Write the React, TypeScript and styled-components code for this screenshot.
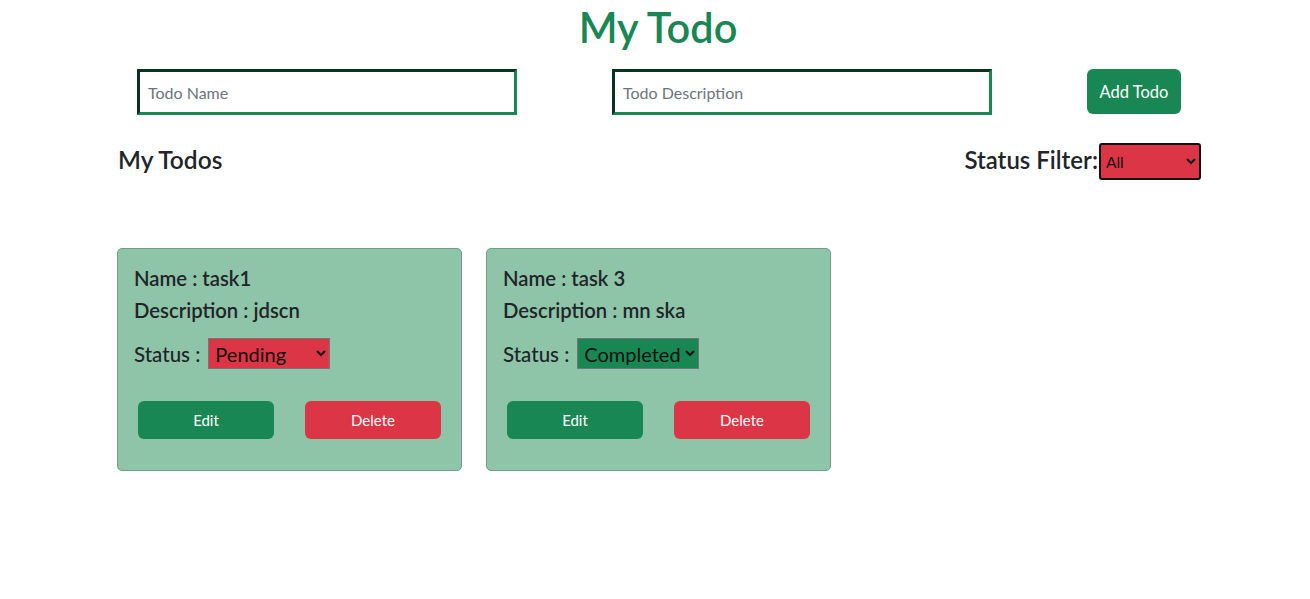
import React from "react";
import styled, { createGlobalStyle } from "styled-components";

const FONT = `"Segoe UI", Lato, "Liberation Sans", sans-serif`;

const Global = createGlobalStyle`
  html, body { margin: 0; padding: 0; background: #fff; }
  body { font-family: ${FONT}; color: #212529; font-size: 16px; }
  * { box-sizing: border-box; }
`;

const Page = styled.div`
  width: 1084px;
  margin-left: 117px;
  display: flex;
  flex-direction: column;
`;

const Title = styled.h1`
  margin: 0;
  margin-left: -117px;
  width: 1310px;
  padding-top: 3px;
  padding-left: 6px;
  text-align: center;
  font-size: 41.5px;
  font-weight: 600;
  line-height: 48px;
  color: #198754;
`;

const InputRow = styled.div`
  display: flex;
  gap: 95px;
  margin-top: 18px;
  margin-left: 20px;
  align-items: flex-start;
`;

const TextInput = styled.input`
  width: 380px;
  height: 46px;
  border: 3px inset #198754;
  padding: 0 8px;
  font-family: ${FONT};
  font-size: 16px;
  color: #212529;
  background: #fff;
  outline: none;
  &::placeholder { color: #6c757d; }
`;

const Button = styled.button<{ $variant?: "success" | "danger" }>`
  border: none;
  border-radius: 6px;
  color: #fff;
  background: ${(p) => (p.$variant === "danger" ? "#dc3545" : "#198754")};
  font-family: ${FONT};
  font-size: 15px;
  cursor: pointer;
`;

const AddButton = styled(Button)`
  width: 94px;
  height: 45px;
  font-size: 16.5px;
`;

const HeaderRow = styled.div`
  display: flex;
  justify-content: space-between;
  align-items: center;
  margin-top: 26px;
  height: 37px;
`;

const Heading = styled.h4`
  margin: 0 0 0 1px;
  font-size: 24.5px;
  font-weight: 600;
  line-height: 1.2;
`;

const FilterGroup = styled.div`
  display: flex;
  align-items: center;
`;

const FilterLabel = styled.span`
  font-size: 24px;
  font-weight: 600;
`;

const FilterSelect = styled.select`
  width: 102px;
  height: 37px;
  margin-left: 1px;
  margin-top: 4px;
  background: #dc3545;
  border: 2px solid #111;
  border-radius: 3px;
  font-family: ${FONT};
  font-size: 15.5px;
  color: #111;
  padding: 0 0 0 1px;
`;

const CardGrid = styled.div`
  display: flex;
  gap: 24px;
  margin-top: 70px;
`;

const Card = styled.div`
  width: 345px;
  height: 223px;
  background: #8ec4a8;
  border: 1px solid #6f9f86;
  border-radius: 5px;
  padding: 13px 16px 0 16px;
  display: flex;
  flex-direction: column;
`;

const Line = styled.div`
  font-size: 20.3px;
  font-weight: 600;
  line-height: 32px;
  color: #212529;
`;

const StatusLine = styled.div`
  display: flex;
  align-items: center;
  margin-top: 12px;
  font-size: 20.5px;
  font-weight: 500;
`;

const StatusSelect = styled.select<{ $status: string }>`
  margin-left: 8px;
  width: 122px;
  height: 31px;
  background: ${(p) => (p.$status === "Completed" ? "#198754" : "#dc3545")};
  border: 1px solid #767676;
  border-radius: 0;
  font-family: ${FONT};
  font-size: 20px;
  color: #111;
  padding: 0 0 0 2px;
`;

const Actions = styled.div`
  display: flex;
  justify-content: space-between;
  padding: 0 4px;
  margin-top: 32px;
`;

const CardButton = styled(Button)`
  width: 136px;
  height: 38px;
`;

const todos = [
  { name: "task1", description: "jdscn", status: "Pending" },
  { name: "task 3", description: "mn ska", status: "Completed" },
];

export default function App() {
  return (
    <>
      <Global />
      <Page>
        <Title>My Todo</Title>
        <InputRow>
          <TextInput placeholder="Todo Name" />
          <TextInput placeholder="Todo Description" />
          <AddButton $variant="success">Add Todo</AddButton>
        </InputRow>
        <HeaderRow>
          <Heading>My Todos</Heading>
          <FilterGroup>
            <FilterLabel>Status Filter:</FilterLabel>
            <FilterSelect defaultValue="All">
              <option>All</option>
              <option>Completed</option>
              <option>Pending</option>
            </FilterSelect>
          </FilterGroup>
        </HeaderRow>
        <CardGrid>
          {todos.map((t) => (
            <Card key={t.name}>
              <Line>Name : {t.name}</Line>
              <Line>Description : {t.description}</Line>
              <StatusLine>
                Status :
                <StatusSelect $status={t.status} defaultValue={t.status}>
                  <option>Pending</option>
                  <option>Completed</option>
                </StatusSelect>
              </StatusLine>
              <Actions>
                <CardButton $variant="success">Edit</CardButton>
                <CardButton $variant="danger">Delete</CardButton>
              </Actions>
            </Card>
          ))}
        </CardGrid>
      </Page>
    </>
  );
}
